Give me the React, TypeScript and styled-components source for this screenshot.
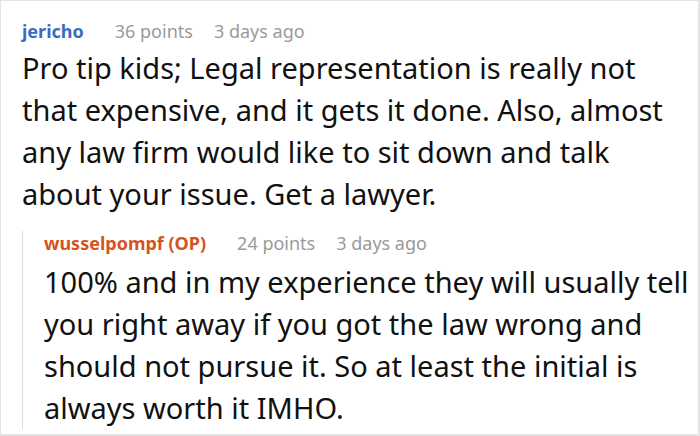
import React from "react";
import styled, { createGlobalStyle } from "styled-components";

const Global = createGlobalStyle`
  html, body { margin: 0; padding: 0; background: #ffffff; }
  body { font-family: "Noto Sans", "Open Sans", sans-serif; }
`;

const Frame = styled.div`
  box-sizing: border-box;
  width: 700px;
  height: 436px;
  border: 1px solid #e4e4e4;
  border-right-width: 2px;
  border-bottom-width: 2px;
  background: #fff;
  padding: 18px 6px 0 21px;
  overflow: hidden;
`;

const Header = styled.div<{ $lift?: number }>`
  display: flex;
  align-items: baseline;
  height: 24px;
  line-height: 24px;
  font-size: 18px;
  margin-top: ${(p) => (p.$lift ? `-${p.$lift}px` : "0")};
`;

const User = styled.span<{ $op?: boolean }>`
  font-weight: 700;
  color: ${(p) => (p.$op ? "#d4531f" : "#3d6cbd")};
  margin-right: 31px;
`;

const Meta = styled.span`
  color: #9a9a9a;
  margin-right: 21px;
`;

const Body = styled.p<{ $gap: number; $tail?: number }>`
  margin: ${(p) => p.$gap}px 0 ${(p) => (p.$tail ? `-${p.$tail}px` : "0")};
  font-size: 29px;
  line-height: 42px;
  color: #111;
`;

const Reply = styled.div`
  margin-top: 27px;
  border-left: 1px solid #dcdcdc;
  padding-left: 21px;
`;

type C = { user: string; op?: boolean; points: number; ago: string; text: string };

const Comment = ({ c, lift, gap, tail }: { c: C; lift?: number; gap: number; tail?: number }) => (
  <>
    <Header $lift={lift}>
      <User $op={c.op}>{c.user}</User>
      <Meta>{c.points} points</Meta>
      <Meta>{c.ago}</Meta>
    </Header>
    <Body $gap={gap} $tail={tail}>{c.text}</Body>
  </>
);

export default function App() {
  return (
    <>
      <Global />
      <Frame>
        <Comment
          gap={4}
          c={{
            user: "jericho",
            points: 36,
            ago: "3 days ago",
            text:
              "Pro tip kids; Legal representation is really not that expensive, and it gets it done. Also, almost any law firm would like to sit down and talk about your issue. Get a lawyer.",
          }}
        />
        <Reply>
          <Comment
            lift={11}
            gap={6}
            tail={11}
            c={{
              user: "wusselpompf (OP)",
              op: true,
              points: 24,
              ago: "3 days ago",
              text:
                "100% and in my experience they will usually tell you right away if you got the law wrong and should not pursue it. So at least the initial is always worth it IMHO.",
            }}
          />
        </Reply>
      </Frame>
    </>
  );
}
